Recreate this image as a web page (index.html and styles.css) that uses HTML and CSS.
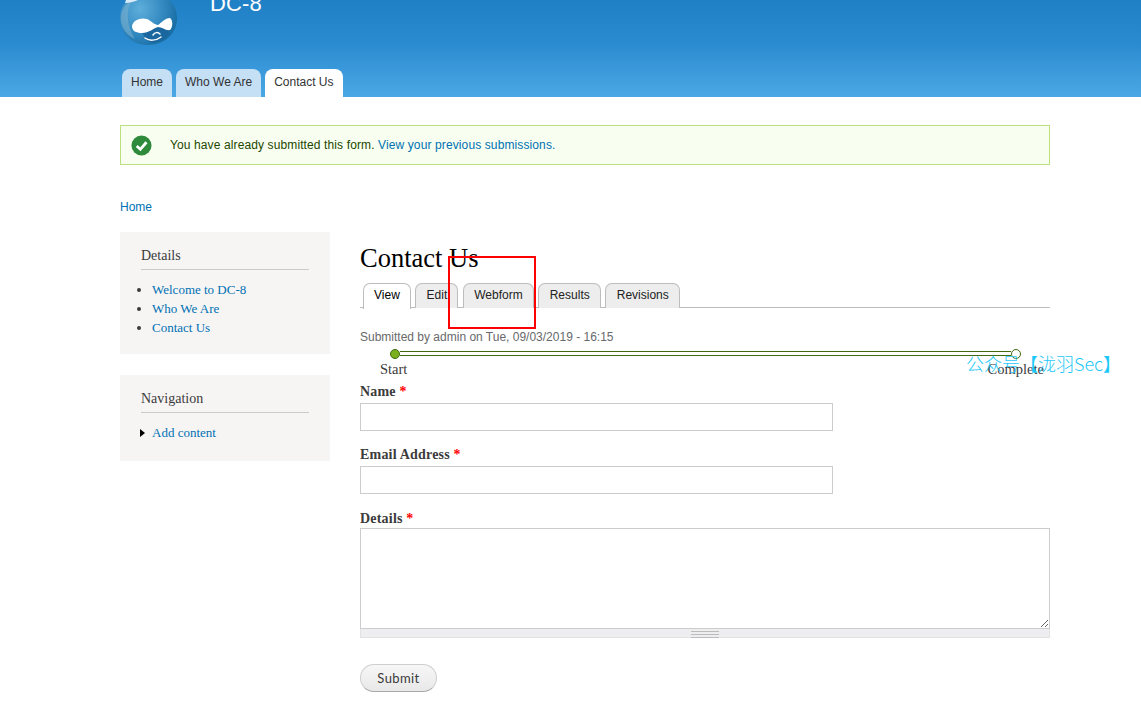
FILE: index.html
```html
<!DOCTYPE html>
<html lang="en">
<head>
<meta charset="utf-8">
<title>Contact Us | DC-8</title>
<link rel="stylesheet" href="styles.css">
</head>
<body>
<header class="site-header">
  <div class="branding">
    <svg class="logo" width="58" height="60" viewBox="0 0 58 60" aria-hidden="true">
      <defs>
        <radialGradient id="drop" cx="0.35" cy="0.4" r="0.75">
          <stop offset="0" stop-color="#5eaedb"/>
          <stop offset="0.6" stop-color="#2f86bd"/>
          <stop offset="1" stop-color="#12669c"/>
        </radialGradient>
      </defs>
      <path d="M30 0 C36 6 57 13 57 33 C57 49 44 60 28 60 C12 60 0 49 0 33 C0 13 20 8 30 0 Z" fill="url(#drop)"/>
      <path d="M1 36 C0 26 4 20 12 15 C6 24 6 40 15 54 C7 50 2 44 1 36 Z" fill="#7fb2d0" opacity="0.55"/>
      <path d="M6 15 C9 14 14 14 18 15 C14 17 9 18 5 18 Z" fill="#d9ecf7"/>
      <path d="M22 46 C28 41 46 40 50 44 C50 50 44 57 33 58 C28 58 24 53 22 46 Z" fill="#1a679f"/>
      <path d="M12 41 C13 35 21 32 27 34 C31 36 35 40 38 40 C41 38 45 33 50 33 C53 35 53 42 50 45 C46 46 42 42 38 42 C34 43 29 48 22 48 C16 48 12 46 12 41 Z" fill="#fff"/>
      <path d="M25 53 C29 56 36 56 41 52 M33 50 C35 47 38 47 40 49" fill="none" stroke="#fff" stroke-width="1.5" stroke-linecap="round"/>
    </svg>
    <div class="site-name">DC-8</div>
  </div>
  <nav class="main-tabs">
    <a class="main-tab" href="#">Home</a>
    <a class="main-tab" href="#">Who We Are</a>
    <a class="main-tab is-active" href="#">Contact Us</a>
  </nav>
</header>

<div class="page">
  <div class="message">
    <svg class="message-icon" width="21" height="21" viewBox="0 0 22 22" aria-hidden="true">
      <circle cx="11" cy="11" r="10.5" fill="#2f8a3b"/>
      <path d="M6 11.5 L9.8 15 L16.2 7.6" fill="none" stroke="#fff" stroke-width="3"/>
    </svg>
    <span class="message-text">You have already submitted this form. <a href="#">View your previous submissions.</a></span>
  </div>

  <div class="breadcrumb"><a href="#">Home</a></div>

  <div class="columns">
    <aside class="sidebar">
      <section class="block">
        <h2 class="block-title">Details</h2>
        <ul class="block-list">
          <li><a href="#">Welcome to DC-8</a></li>
          <li><a href="#">Who We Are</a></li>
          <li><a href="#">Contact Us</a></li>
        </ul>
      </section>
      <section class="block block-nav">
        <h2 class="block-title">Navigation</h2>
        <ul class="block-list block-list-arrow">
          <li><a href="#">Add content</a></li>
        </ul>
      </section>
    </aside>

    <main class="content">
      <h1 class="page-title">Contact Us</h1>
      <nav class="local-tabs">
        <a class="local-tab is-active" href="#">View</a>
        <a class="local-tab" href="#">Edit</a>
        <a class="local-tab" href="#">Webform</a>
        <a class="local-tab" href="#">Results</a>
        <a class="local-tab" href="#">Revisions</a>
      </nav>
      <p class="submitted">Submitted by admin on Tue, 09/03/2019 - 16:15</p>
      <div class="progress">
        <div class="progress-track">
          <span class="progress-dot progress-dot-start"></span>
          <span class="progress-line"></span>
          <span class="progress-dot progress-dot-end"></span>
        </div>
        <div class="progress-labels">
          <span>Start</span>
          <span>Complete</span>
        </div>
      </div>
      <form class="webform">
        <div class="field field-name">
          <label class="field-label" for="name">Name <span class="req">*</span></label>
          <input class="text-input" id="name" type="text">
        </div>
        <div class="field field-email">
          <label class="field-label" for="email">Email Address <span class="req">*</span></label>
          <input class="text-input" id="email" type="text">
        </div>
        <div class="field field-details">
          <label class="field-label" for="details">Details <span class="req">*</span></label>
          <div class="textarea-wrap">
            <textarea class="text-area" id="details"></textarea>
            <div class="grippie"></div>
          </div>
        </div>
        <button class="submit" type="button">Submit</button>
      </form>
    </main>
  </div>
</div>

<div class="annotation"></div>
<div class="watermark">公众号【泷羽Sec】</div>
</body>
</html>
```
FILE: styles.css
```css
* { box-sizing: border-box; }
html, body { margin: 0; padding: 0; }
body {
  background: #fff;
  color: #3b3b3b;
  font-family: "Liberation Sans", Arial, sans-serif;
  font-size: 12px;
  height: 727px;
  overflow: hidden;
  position: relative;
}
a { color: #0071b3; text-decoration: none; }

.site-header {
  height: 97px;
  padding: 0 120px;
  background: linear-gradient(to bottom, #2080c6 0%, #2b8bd0 45%, #4ba8e5 100%);
  overflow: hidden;
  display: flex;
  flex-direction: column;
  justify-content: space-between;
}
.branding { display: flex; align-items: flex-start; height: 45px; }
.logo { margin-top: -15px; flex: none; }
.site-name {
  margin-left: 32px;
  margin-top: -10px;
  color: #fff;
  font-size: 22px;
  line-height: 27px;
  letter-spacing: 0.1px;
}
.main-tabs { display: flex; gap: 4px; padding-left: 2px; }
.main-tab {
  height: 28px;
  padding: 0 9px;
  line-height: 26px;
  background: #c5dff5;
  color: #333;
  border-radius: 8px 8px 0 0;
  font-size: 12px;
}
.main-tab.is-active { background: #fff; }

.page { width: 930px; margin-left: 120px; }
.message {
  margin-top: 28px;
  height: 40px;
  border: 1px solid #bde07e;
  background: #f8fff0;
  display: flex;
  align-items: center;
  padding-left: 10px;
  gap: 18px;
  color: #234600;
}
.message-text { letter-spacing: 0.115px; }
.message-icon { flex: none; }
.breadcrumb { margin-top: 35px; line-height: 14px; }

.columns { display: flex; margin-top: 18px; gap: 30px; }
.sidebar { width: 210px; flex: none; }
.block {
  background: #f7f5f4;
  padding: 15px 21px 0;
  height: 122px;
  margin-bottom: 21px;
  font-family: "Liberation Serif", serif;
}
.block-nav { height: 86px; }
.block-title {
  margin: 0;
  padding-bottom: 4px;
  border-bottom: 1px solid #ccc9c7;
  font-size: 14px;
  line-height: 18px;
  font-weight: 400;
  color: #3b3b3b;
}
.block-list {
  margin: 10px 0 0;
  padding: 0 0 0 11px;
  font-size: 13px;
  line-height: 19px;
}
.block-list-arrow { list-style: none; position: relative; }
.block-list-arrow li::before {
  content: "";
  position: absolute;
  left: -1px;
  top: 6px;
  border-left: 5px solid #000;
  border-top: 4px solid transparent;
  border-bottom: 4px solid transparent;
}

.content { width: 690px; flex: none; }
.page-title {
  margin: 10px 0 0;
  font-family: "Liberation Serif", serif;
  font-size: 26.5px;
  line-height: 32px;
  font-weight: 400;
  color: #000;
}
.local-tabs {
  display: flex;
  gap: 4.5px;
  margin-top: 9px;
  padding-left: 3px;
  height: 25px;
  border-bottom: 1px solid #bfbdbb;
}
.local-tab {
  height: 25px;
  padding: 0 10.25px;
  line-height: 23px;
  border: 1px solid #bfbdbb;
  border-bottom: 0;
  border-radius: 7px 7px 0 0;
  background: #ededed;
  color: #222;
}
.local-tab.is-active {
  height: 26px;
  background: #fff;
  padding: 0 10px;
  color: #000;
}
.submitted { margin: 22px 0 0; line-height: 14px; color: #68696b; }

.progress { font-family: "Liberation Serif", serif; font-size: 14.5px; }
.progress-track { display: flex; align-items: center; margin: 4px 29px 0 30px; height: 11px; }
.progress-dot {
  width: 10px;
  height: 10px;
  border-radius: 50%;
  border: 1px solid #3f6a10;
  flex: none;
}
.progress-dot-start { background: #7ab01f; }
.progress-dot-end { background: #fff; }
.progress-line {
  flex: 1;
  height: 5px;
  border-top: 1px solid #3f6a10;
  border-bottom: 1px solid #3f6a10;
  background: #fff;
}
.progress-labels {
  display: flex;
  justify-content: space-between;
  padding: 0 6px 0 20px;
  line-height: 18px;
  margin-top: 1px;
  color: #3b3b3b;
}

.webform { font-family: "Liberation Serif", serif; }
.field-label {
  display: block;
  font-size: 14px;
  line-height: 16px;
  font-weight: 700;
  letter-spacing: 0.2px;
  color: #3b3b3b;
}
.req { color: #f00; }
.field-name { margin-top: 6px; }
.field-email { margin-top: 16px; }
.field-details { margin-top: 17px; }
.text-input {
  display: block;
  width: 473px;
  height: 28px;
  margin-top: 3px;
  border: 1px solid #ccc;
  background: #fff;
}
.textarea-wrap { margin-top: 1px; }
.text-area {
  display: block;
  width: 690px;
  height: 101px;
  border: 1px solid #ccc;
  background: #fff;
  margin: 0;
  resize: vertical;
}
.grippie {
  height: 9px;
  background: #eeedef;
  border: 1px solid #e2e2e2;
  border-top: 0;
  position: relative;
}
.grippie::after {
  content: "";
  position: absolute;
  left: 330px;
  top: 2px;
  width: 28px;
  height: 5px;
  border-top: 1px solid #bbb;
  border-bottom: 1px solid #bbb;
  background: linear-gradient(to bottom, transparent 40%, #bbb 40%, #bbb 60%, transparent 60%);
}
.submit {
  display: block;
  margin-top: 26px;
  width: 77px;
  height: 28px;
  border: 1px solid #d0cfcf;
  border-bottom-color: #a9a8a8;
  border-radius: 14px;
  background: linear-gradient(to bottom, #f7f7f7, #e8e8e8);
  font-family: "Lato", "Liberation Sans", sans-serif;
  font-size: 13px;
  letter-spacing: 0.4px;
  color: #3a3a3a;
  padding: 0;
}

.annotation {
  position: absolute;
  left: 448px;
  top: 256px;
  width: 88px;
  height: 73px;
  border: 2px solid #f00;
}
.watermark {
  position: absolute;
  left: 966px;
  top: 351px;
  font-family: "Noto Sans CJK SC", "Noto Sans", sans-serif;
  font-size: 18px;
  line-height: 24px;
  font-weight: 300;
  color: #1fc8fa;
}
```
